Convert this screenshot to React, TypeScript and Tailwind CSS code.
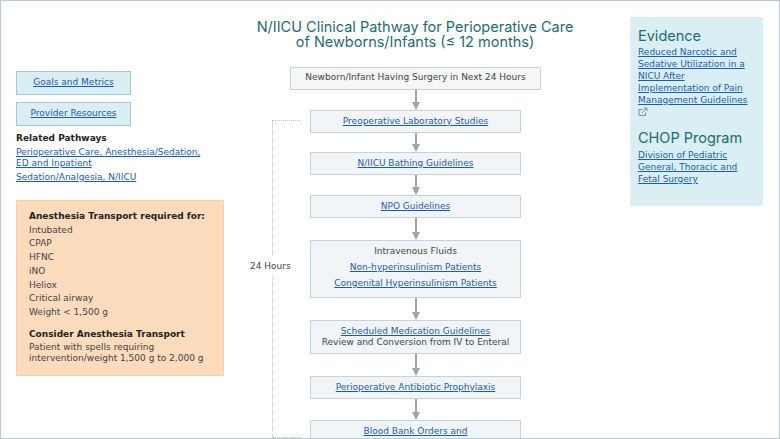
const font = "[font-family:'DejaVu_Sans',Verdana,sans-serif]";
const linkCls = "text-[#1a5cb0] underline";

function Arrow({ h }: { h: number }) {
  return (
    <div className="flex justify-center">
      <svg width="10" height={h} viewBox={`0 0 10 ${h}`} className="block">
        <rect x="4" y="0" width="2" height={h - 6} fill="#a3a3a3" />
        <path d={`M1 ${h - 8} L9 ${h - 8} L5 ${h} Z`} fill="#a3a3a3" />
      </svg>
    </div>
  );
}

function Step({ children, className = "" }: { children: React.ReactNode; className?: string }) {
  return (
    <div className={`mx-auto w-[211px] border border-[#c3d5db] bg-[#f2f5f7] text-center text-[9px] leading-[11px] ${className}`}>
      {children}
    </div>
  );
}

export default function App() {
  return (
    <div className={`${font} flex h-[439px] w-[780px] overflow-hidden border border-[#b8ccd5] bg-white text-[#444]`}>
      {/* Left column */}
      <aside className="ml-[15px] w-[208px] shrink-0 pt-[70px] text-[9px]">
        <div className="flex h-[24px] w-[115px] items-center justify-center border border-[#a9c6d0] bg-[#d9eff4]">
          <a className={linkCls}>Goals and Metrics</a>
        </div>
        <div className="mt-[7px] flex h-[24px] w-[115px] items-center justify-center border border-[#a9c6d0] bg-[#d9eff4]">
          <a className={linkCls}>Provider Resources</a>
        </div>
        <p className="mt-[6px] font-bold leading-[12px] text-[#222]">Related Pathways</p>
        <a className={`${linkCls} mt-[3px] block leading-[11px] whitespace-nowrap`}>
          Perioperative Care, Anesthesia/Sedation,
          <br />
          ED and Inpatient
        </a>
        <a className={`${linkCls} mt-[2px] block leading-[13px]`}>Sedation/Analgesia, N/IICU</a>

        <div className="mt-[16px] h-[176px] border border-[#fbcda6] bg-[#fddbbd] pl-[12px] pt-[9px] leading-[13.7px]">
          <p className="font-bold text-[#222]">Anesthesia Transport required for:</p>
          <p>Intubated</p>
          <p>CPAP</p>
          <p>HFNC</p>
          <p>iNO</p>
          <p>Heliox</p>
          <p>Critical airway</p>
          <p>Weight &lt; 1,500 g</p>
          <p className="mt-[8px] font-bold text-[#222]">Consider Anesthesia Transport</p>
          <p className="mt-[1px] leading-[11px] whitespace-nowrap">
            Patient with spells requiring
            <br />
            intervention/weight 1,500 g to 2,000 g
          </p>
        </div>
      </aside>

      {/* Center column */}
      <main className="relative ml-[26px] w-[330px] shrink-0">
        <h1 className="mt-[18px] whitespace-nowrap text-center font-['Inter',sans-serif] text-[14.5px] font-normal leading-[15px] text-[#1f6b73]">
          N/IICU Clinical Pathway for Perioperative Care
          <br />
          of Newborns/Infants (≤ 12 months)
        </h1>

        <div className="ml-[5px] mt-[18px] w-[321px]">
          <div className="mx-auto flex h-[23px] w-[251px] items-center justify-center border border-[#c3d5db] bg-[#f5f6f7] pb-[1px] text-[9px]">
            Newborn/Infant Having Surgery in Next 24 Hours
          </div>
          <Arrow h={20} />
          <Step className="flex h-[23px] items-center justify-center pb-[1px]">
            <a className={linkCls}>Preoperative Laboratory Studies</a>
          </Step>
          <Arrow h={19} />
          <Step className="flex h-[23px] items-center justify-center">
            <a className={linkCls}>N/IICU Bathing Guidelines</a>
          </Step>
          <Arrow h={20} />
          <Step className="flex h-[23px] items-center justify-center">
            <a className={linkCls}>NPO Guidelines</a>
          </Step>
          <Arrow h={22} />
          <Step className="flex h-[58px] flex-col items-center justify-center gap-[5px] pb-[4px]">
            <span>Intravenous Fluids</span>
            <a className={linkCls}>Non-hyperinsulinism Patients</a>
            <a className={linkCls}>Congenital Hyperinsulinism Patients</a>
          </Step>
          <Arrow h={22} />
          <Step className="flex h-[34px] flex-col items-center justify-center pb-[1px]">
            <a className={linkCls}>Scheduled Medication Guidelines</a>
            <span>Review and Conversion from IV to Enteral</span>
          </Step>
          <Arrow h={22} />
          <Step className="flex h-[23px] items-center justify-center pb-[1px]">
            <a className={linkCls}>Perioperative Antibiotic Prophylaxis</a>
          </Step>
          <Arrow h={21} />
          <Step className="h-[40px] pt-[5px]">
            <a className={linkCls}>Blood Bank Orders and</a>
          </Step>
        </div>

        {/* 24 hour bracket */}
        <div className="absolute left-[22px] top-[119px] h-[318px] w-[28px] border-b border-l border-t border-dotted border-[#c4c4c4]" />
        <div className="absolute left-[0px] top-[255px] bg-white py-[4px] text-[9px] leading-[12px] whitespace-nowrap">24 Hours</div>
      </main>

      {/* Right column */}
      <aside className="ml-[50px] mt-[16px] h-[189px] w-[133px] shrink-0 bg-[#d9eff4] pl-[8px] pt-[10px] text-[9px] leading-[12px]">
        <h2 className="font-['Inter',sans-serif] text-[14.5px] font-normal leading-[18px] text-[#1f6b73]">Evidence</h2>
        <a className={`${linkCls} mt-[1px] block whitespace-nowrap`}>
          Reduced Narcotic and
          <br />
          Sedative Utilization in a
          <br />
          NICU After
          <br />
          Implementation of Pain
          <br />
          Management Guidelines
        </a>
        <svg className="mt-[1px] block" width="10" height="10" viewBox="0 0 10 10" fill="none" stroke="#8a8a8a" strokeWidth="1">
          <path d="M7.5 5.5V8.5H1V2.5H4.5" />
          <path d="M4 6L8.5 1.5M5.8 1H9V4.2" />
        </svg>
        <h2 className="mt-[12px] font-['Inter',sans-serif] text-[14.5px] font-normal leading-[18px] text-[#1f6b73]">CHOP Program</h2>
        <a className={`${linkCls} mt-[2px] block whitespace-nowrap`}>
          Division of Pediatric
          <br />
          General, Thoracic and
          <br />
          Fetal Surgery
        </a>
      </aside>
    </div>
  );
}
